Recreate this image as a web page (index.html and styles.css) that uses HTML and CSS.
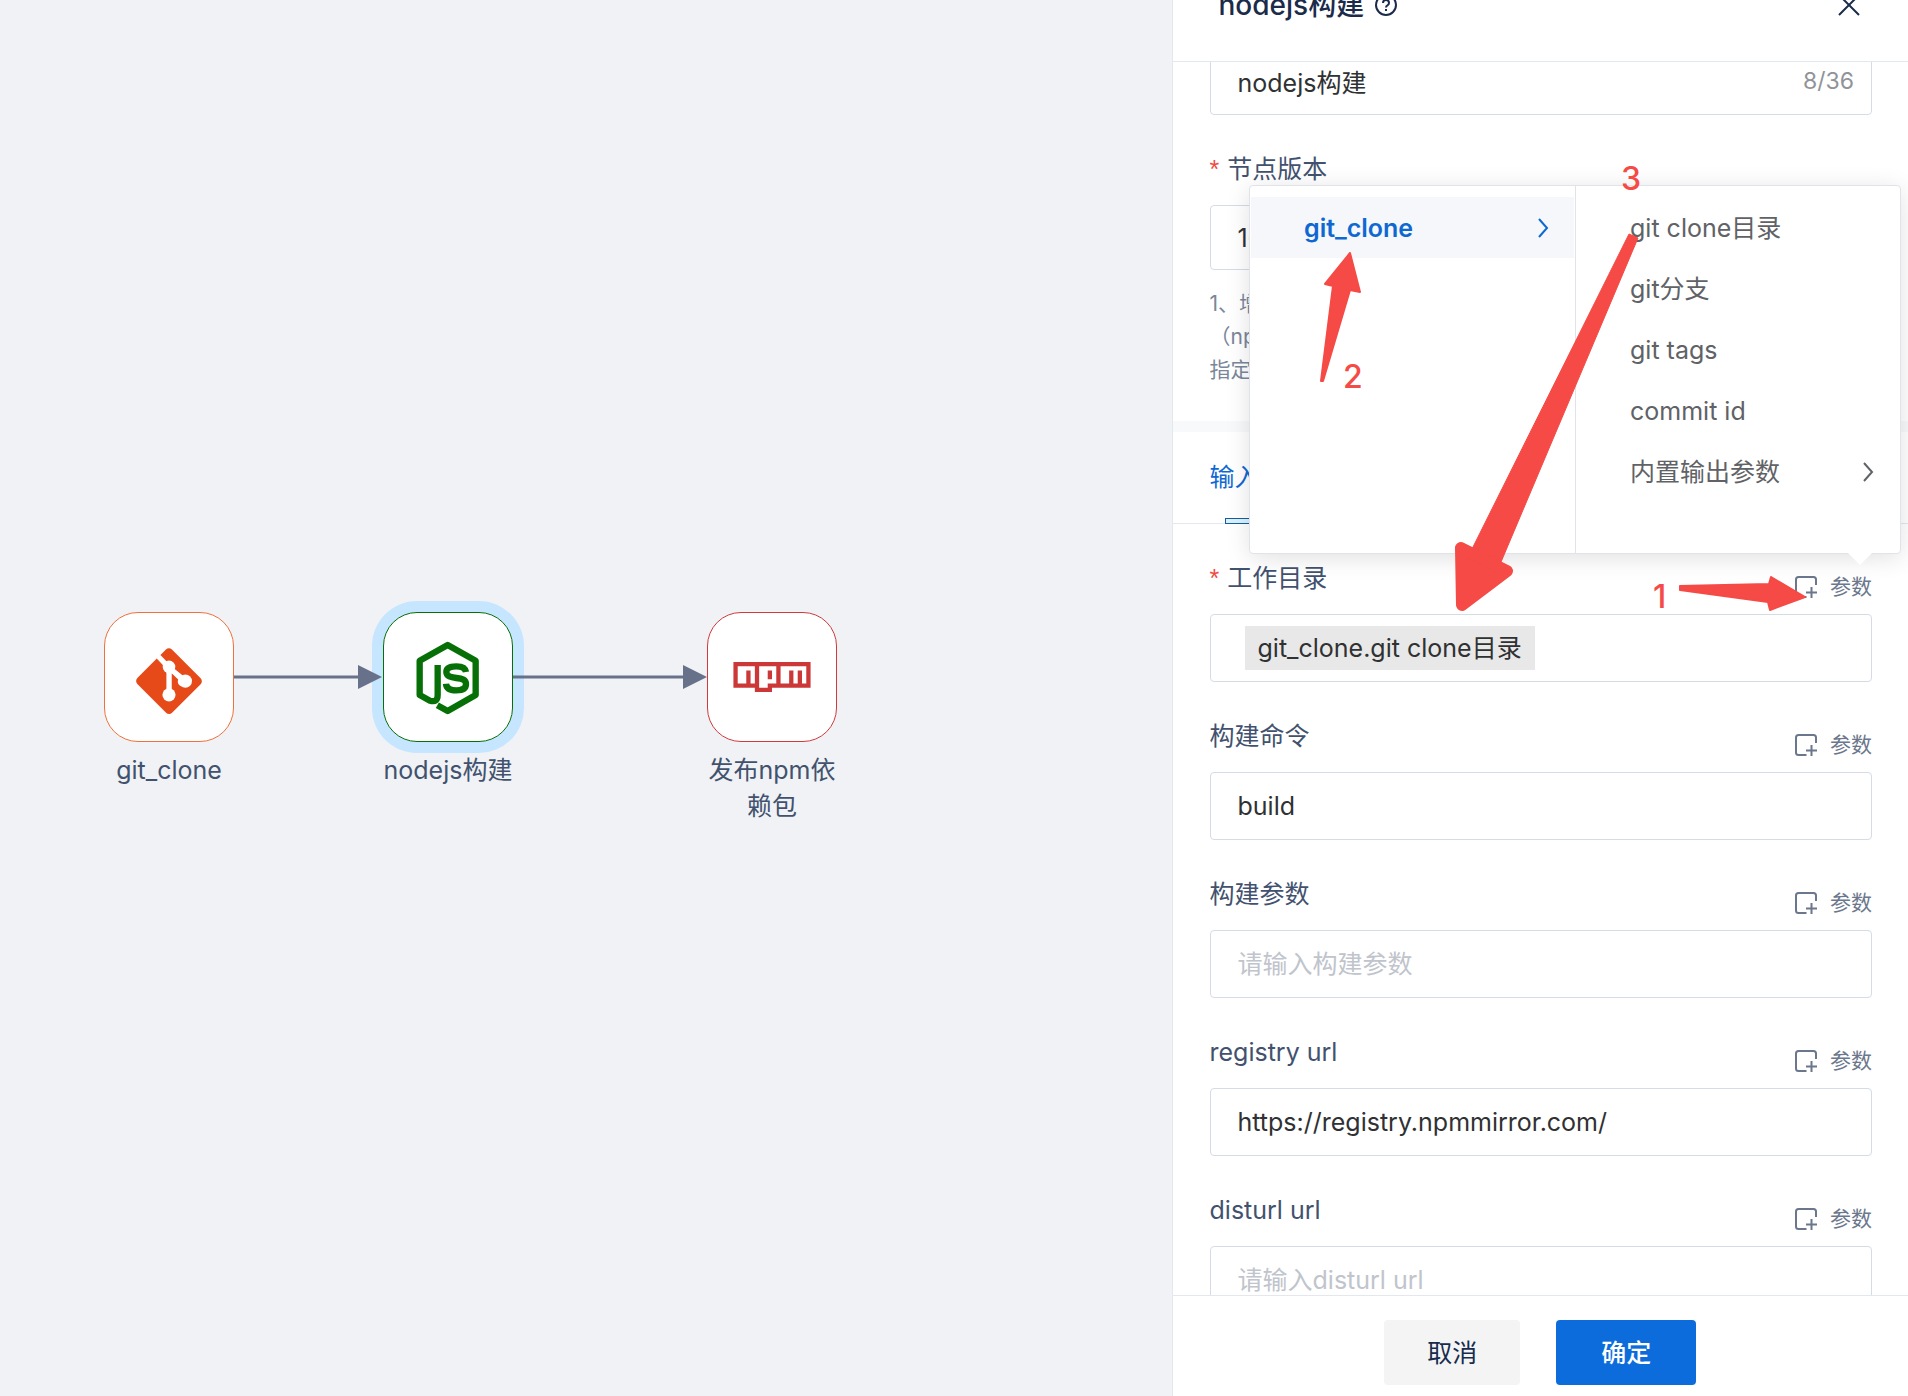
FILE: index.html
```html
<!DOCTYPE html>
<html lang="zh-CN">

<head>
    <meta charset="UTF-8">
    <meta name="viewport" content="width=device-width, initial-scale=1.0">
    <title>nodejs构建</title>
    <link rel="stylesheet" href="styles.css">
</head>

<body>
    <!-- shared icons -->
    <svg class="sprite" aria-hidden="true">
        <symbol id="icon-param" viewBox="0 0 22 22">
            <path d="M11.500 21H3.500Q1 21 1 18.500V3.500Q1 1 3.500 1H18.500Q21 1 21 3.500V9M16.500 11V22M11 16.500H22" />
        </symbol>
        <symbol id="icon-right" viewBox="0 0 10 20">
            <path d="M1 1L9 10L1 19" />
        </symbol>
    </svg>

    <div class="page">
        <main class="canvas">
            <svg class="edge edge-1" width="148" height="24" viewBox="0 0 148 24">
                <path d="M0 12H126" stroke="#677189" stroke-width="3" />
                <path d="M124 0L148 12L124 24Z" fill="#677189" />
            </svg>
            <svg class="edge edge-2" width="194" height="24" viewBox="0 0 194 24">
                <path d="M0 12H172" stroke="#677189" stroke-width="3" />
                <path d="M170 0L194 12L170 24Z" fill="#677189" />
            </svg>

            <div class="node node-git">
                <div class="node-box">
                    <svg width="66" height="74" viewBox="0 -3 24 27" fill="#e64a19">
                        <path d="M23.546 10.93L13.067.452c-.604-.603-1.582-.603-2.188 0L8.708 2.627l2.76 2.76c.645-.215 1.379-.07 1.889.441.516.515.658 1.258.438 1.9l2.658 2.66c.645-.223 1.387-.078 1.9.435.721.72.721 1.884 0 2.604-.719.719-1.881.719-2.6 0-.539-.541-.674-1.337-.404-1.996L12.86 8.955v6.525c.176.086.342.203.488.348.713.721.713 1.883 0 2.6-.719.721-1.889.721-2.609 0-.719-.719-.719-1.879 0-2.598.182-.18.387-.316.605-.406V8.835c-.217-.091-.424-.222-.6-.401-.545-.545-.676-1.342-.396-2.009L7.636 3.7.45 10.881c-.6.605-.6 1.584 0 2.189l10.48 10.477c.604.604 1.582.604 2.186 0l10.43-10.43c.605-.603.605-1.582 0-2.187" />
                        <path d="M8.200 3.100L12 7.100V17M12 7.100L18 12" fill="none" stroke="#fff" stroke-width="1.900" />
                        <circle cx="12" cy="17" r="2.400" fill="#fff" />
                        <circle cx="18" cy="12" r="2.400" fill="#fff" />
                        <circle cx="12" cy="6.800" r="2.300" fill="#fff" />
                    </svg>
                </div>
                <div class="node-name">git_clone</div>
            </div>

            <div class="node node-js active">
                <div class="node-box">
                    <svg width="66" height="76" viewBox="1005 149 198 228" fill="none" stroke="#067006" stroke-width="19" stroke-linejoin="round">
                        <path d="M1073 227V317Q1073 341 1050 334L1019 317V214L1103 167L1187 214V317L1103 365L1072 348" />
                        <path d="M1158 248C1156 234 1144 231 1129 231C1110 231 1099 236 1099 248C1099 261 1113 264 1129 266C1147 268 1158 271 1158 284C1158 299 1145 303 1129 303C1110 303 1099 298 1098 283" />
                    </svg>
                </div>
                <div class="node-name">nodejs构建</div>
            </div>

            <div class="node node-npm">
                <div class="node-box">
                    <svg width="78" height="30" viewBox="0 0 18 7" fill="#cb3837" fill-rule="evenodd">
                        <path d="M0 0h18v6H9v1H5V6H0zM1 1v4h2V2h1v3h1V1zM6 1v5h2V5h2V1zM8 2h1v2H8zM11 1v4h2V2h1v3h1V2h1v3h1V1z" />
                    </svg>
                </div>
                <div class="node-name">发布npm依赖包</div>
            </div>
        </main>

        <aside class="drawer">
            <header class="drawer-header">
                <h2>nodejs构建</h2>
                <svg class="help" width="24" height="24" viewBox="0 0 24 24" fill="none" stroke="#1b2b4a" stroke-width="2">
                    <circle cx="12" cy="12" r="10" />
                    <path d="M9 10Q9 7 12 7T15 10Q15 11.500 13.500 12.300T12 14.500" />
                    <path d="M12 16V18" />
                </svg>
                <button class="close" type="button" aria-label="关闭">
                    <svg width="22" height="22" viewBox="0 0 22 22" fill="none" stroke="#1b2b4a" stroke-width="2">
                        <path d="M1 1L21 21M21 1L1 21" />
                    </svg>
                </button>
            </header>

            <form class="drawer-body">
                <div class="section">
                    <div class="control name-control">
                        <input type="text" aria-label="节点名称" value="nodejs构建" maxlength="36">
                        <span class="count">8/36</span>
                    </div>

                    <div class="field-head">
                        <label class="required" for="version">节点版本</label>
                    </div>
                    <select class="control version" id="version">
                        <option>16.13.0</option>
                    </select>
                    <p class="tip">1、增加缓存<br>（npm）<br>指定版本</p>
                </div>

                <div class="tabs">
                    <a class="tab" href="#input">输入参数</a>
                </div>

                <div class="section">
                    <div class="field-head">
                        <label class="required" for="workdir">工作目录</label>
                        <button class="param" type="button"><svg><use href="#icon-param" /></svg>参数</button>
                    </div>
                    <div class="control tag-control">
                        <span class="tag">git_clone.git clone目录</span>
                        <input type="text" id="workdir">
                    </div>

                    <div class="field-head">
                        <label for="command">构建命令</label>
                        <button class="param" type="button"><svg><use href="#icon-param" /></svg>参数</button>
                    </div>
                    <div class="control">
                        <input type="text" id="command" value="build">
                    </div>

                    <div class="field-head">
                        <label for="args">构建参数</label>
                        <button class="param" type="button"><svg><use href="#icon-param" /></svg>参数</button>
                    </div>
                    <div class="control">
                        <input type="text" id="args" placeholder="请输入构建参数">
                    </div>

                    <div class="field-head">
                        <label for="registry">registry url</label>
                        <button class="param" type="button"><svg><use href="#icon-param" /></svg>参数</button>
                    </div>
                    <div class="control">
                        <input type="text" id="registry" value="https://registry.npmmirror.com/">
                    </div>

                    <div class="field-head">
                        <label for="disturl">disturl url</label>
                        <button class="param" type="button"><svg><use href="#icon-param" /></svg>参数</button>
                    </div>
                    <div class="control">
                        <input type="text" id="disturl" placeholder="请输入disturl url">
                    </div>
                </div>
            </form>

            <footer class="drawer-footer">
                <button class="btn" type="button">取消</button>
                <button class="btn btn-primary" type="button">确定</button>
            </footer>
        </aside>

        <div class="cascader">
            <div class="menu">
                <button class="option selected" type="button">git_clone<svg><use href="#icon-right" /></svg></button>
            </div>
            <div class="menu">
                <button class="option" type="button">git clone目录</button>
                <button class="option" type="button">git分支</button>
                <button class="option" type="button">git tags</button>
                <button class="option" type="button">commit id</button>
                <button class="option" type="button">内置输出参数<svg><use href="#icon-right" /></svg></button>
            </div>
        </div>

        <!-- step marks -->
        <svg class="steps" width="736" height="640" viewBox="1172 0 736 640">
            <path d="M1680 586L1769 584L1771 577L1805 597L1770 610L1768 602L1680 590Z" />
            <path d="M1350 253L1360 292L1350 290L1323 381L1321 381L1333 286L1325 284Z" />
            <path class="shaft" d="M1629 234L1638 238L1501 562L1472 549Z" />
            <path class="head" d="M1461 548L1462 605L1507 571Z" />
            <text x="1653" y="608">1</text>
            <text x="1343" y="388">2</text>
            <text x="1621" y="190">3</text>
        </svg>
    </div>
</body>

</html>
```
FILE: styles.css
```css
* {
    box-sizing: border-box;
}

body {
    margin: 0;
    font-family: Inter, "Noto Sans CJK SC", sans-serif;
    font-size: 25px;
    line-height: 36px;
    color: #42526e;
}

button,
input,
select {
    font: inherit;
    color: inherit;
    border: 0;
    background: none;
    padding: 0;
}

button {
    cursor: pointer;
}

.sprite {
    position: absolute;
    width: 0;
    height: 0;
}

.page {
    position: relative;
    display: grid;
    grid-template-columns: minmax(0, 1fr) 38.6%;
    height: 100vh;
    overflow: hidden;
    background-color: #f0f2f6;
}

/* pipeline canvas */
.canvas {
    position: relative;
}

.node {
    position: absolute;
    top: 612px;
    width: 130px;
    text-align: center;
}

.node-git {
    left: 104px;
}

.node-js {
    left: 383px;
}

.node-npm {
    left: 707px;
}

.node-box {
    display: flex;
    align-items: center;
    justify-content: center;
    height: 130px;
    border: 1px solid #f0703c;
    border-radius: 34px;
    background-color: #fff;
}

.node-js .node-box {
    border-color: #067006;
}

.node-npm .node-box {
    border-color: #d03a3c;
}

.active .node-box {
    box-shadow: 0 0 0 11px #c6e5ff;
}

.node-name {
    margin-top: 10px;
}

.edge {
    position: absolute;
    top: 665px;
    z-index: 1;
}

.edge-1 {
    left: 234px;
}

.edge-2 {
    left: 513px;
}

/* drawer */
.drawer {
    display: flex;
    flex-direction: column;
    height: calc(100vh + 50px);
    margin-top: -50px;
    background-color: #fff;
    border-left: 1px solid #e3e7ee;
}

.drawer-header {
    display: flex;
    flex: none;
    align-items: center;
    height: 112px;
    padding: 0 48px 2px 46px;
    border-bottom: 1px solid #e3e7ee;
    color: #1b2b4a;
}

.drawer-header h2 {
    margin: 0;
    font-size: 28px;
    font-weight: 500;
}

.help {
    margin-left: 10px;
}

.close {
    display: flex;
    margin-left: auto;
}

.drawer-body {
    flex: 1;
    min-height: 0;
    overflow: hidden;
}

.section {
    padding: 0 36px 0 37px;
}

.control {
    display: flex;
    align-items: center;
    width: 100%;
    height: 68px;
    padding: 0 17px 0 27px;
    border: 1px solid #d5dce6;
    border-radius: 4px;
    color: #303133;
}

.control input {
    flex: 1;
    min-width: 0;
    height: 100%;
    outline: 0;
}

.control input::placeholder {
    color: #c0c4cc;
    opacity: 1;
}

.name-control {
    margin-top: -15px;
}

.count {
    font-size: 23px;
    color: #909399;
}

.version {
    height: 65px;
    appearance: none;
}

.field-head {
    display: flex;
    align-items: flex-end;
    justify-content: space-between;
    height: 90px;
}

.field-head label {
    padding-bottom: 18px;
}

.required::before {
    content: "*";
    margin-right: 8px;
    color: #f04a43;
    font-family: "Liberation Sans", sans-serif;
}

.param {
    display: flex;
    align-items: center;
    gap: 13px;
    padding-bottom: 9px;
    font-size: 21px;
    color: #6b778c;
}

.param svg {
    width: 22px;
    height: 22px;
    fill: none;
    stroke: currentColor;
    stroke-width: 2;
}

.tip {
    margin: 17px 0 35px;
    font-size: 21px;
    line-height: 33px;
    color: #7a869a;
}

.tabs {
    height: 103px;
    padding: 27px 37px 0;
    border-top: 11px solid #f8f9fb;
    border-bottom: 1px solid #e3e7ee;
}

.tab {
    position: relative;
    display: inline-block;
    height: 65px;
    color: #0f68d2;
    text-decoration: none;
}

.tab::after {
    content: "";
    position: absolute;
    right: 15px;
    bottom: 0;
    left: 15px;
    height: 4px;
    border: 1px solid #155f9e;
    background-color: #d9f1ff;
}

.tag-control {
    padding-left: 34px;
}

.tag {
    height: 44px;
    padding: 0 13px;
    line-height: 44px;
    background-color: #e8e8e8;
}

.drawer-footer {
    display: flex;
    flex: none;
    justify-content: center;
    gap: 36px;
    padding: 24px 0 11px;
    border-top: 1px solid #e3e7ee;
}

.btn {
    height: 65px;
    padding: 0 43px;
    border-radius: 4px;
    background-color: #f4f4f4;
    color: #172b4d;
}

.btn-primary {
    padding: 0 45px;
    background-color: #0c6cdc;
    color: #fff;
    font-weight: 500;
}

/* parameter picker */
.cascader {
    position: absolute;
    top: 185px;
    right: 7px;
    display: grid;
    grid-template-columns: 1fr 1fr;
    width: 652px;
    height: 369px;
    border: 1px solid #e0e4ea;
    border-radius: 4px;
    background-color: #fff;
    box-shadow: 0 4px 24px rgba(0, 0, 0, 0.12);
}

.cascader::after {
    content: "";
    position: absolute;
    right: 28px;
    bottom: -12px;
    width: 24px;
    height: 12px;
    background-color: #fff;
    clip-path: polygon(0 0, 100% 0, 50% 100%);
}

.menu {
    padding: 11px 1px;
}

.menu + .menu {
    border-left: 1px solid #e0e4ea;
}

.option {
    display: flex;
    align-items: center;
    justify-content: space-between;
    width: 100%;
    height: 61px;
    padding: 0 25px 0 53px;
    color: #606266;
}

.option svg {
    width: 12px;
    height: 20px;
    fill: none;
    stroke: currentColor;
    stroke-width: 2;
}

.selected {
    background-color: #f5f7fa;
    color: #0f68d2;
    font-weight: 600;
}

.steps {
    position: absolute;
    top: 0;
    right: 0;
    fill: #f54a45;
    stroke: #f54a45;
    stroke-width: 2;
    stroke-linejoin: round;
    pointer-events: none;
}

.steps .shaft {
    stroke-width: 1;
}

.steps .head {
    stroke-width: 12;
}

.steps text {
    font-size: 32px;
    font-weight: 500;
    stroke: none;
}
```
